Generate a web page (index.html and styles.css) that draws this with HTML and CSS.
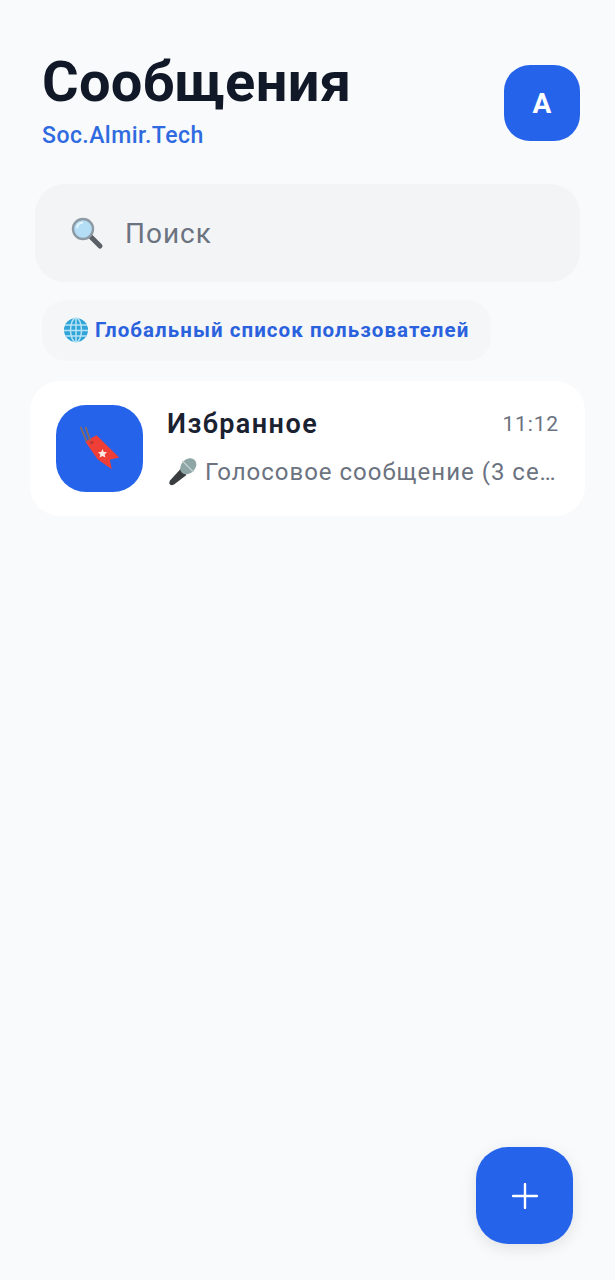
FILE: index.html
```html
<!DOCTYPE html>
<html>
<head>
    <meta charset="utf-8"/>
    <title>Сообщения</title>
    <link rel="stylesheet" href="styles.css">
</head>
<body>
<div id="app">
    <div class="header">
        <div class="header-text">
            <div class="title">Сообщения</div>
            <div class="sub-title">Soc.Almir.Tech</div>
        </div>
        <div class="profile">A</div>
    </div>

    <div class="search">
        <svg class="search-icon" viewBox="0 0 34 34" width="34" height="34">
            <path d="M20 20 L30 30" stroke="#5b6066" stroke-width="5" stroke-linecap="round"/>
            <circle cx="13" cy="13" r="10" fill="#b4def5" stroke="#8d9aa3" stroke-width="2.400"/>
            <path d="M7 12 A6.500 6.500 0 0 1 13 6.500" fill="none" stroke="#e3f4fc" stroke-width="2"/>
        </svg>
        <span class="search-text">Поиск</span>
    </div>

    <div class="global-link">
        <svg class="globe-icon" viewBox="0 0 26 26" width="26" height="26">
            <circle cx="13" cy="13" r="12" fill="#2fa4d9"/>
            <g fill="none" stroke="#b5e2f5" stroke-width="1.500">
                <ellipse cx="13" cy="13" rx="5.500" ry="12"/>
                <path d="M13 1 V25 M2 8 H24 M1 13.500 H25 M2 19 H24"/>
            </g>
        </svg>
        <span>Глобальный список пользователей</span>
    </div>

    <div class="chat-item">
        <div class="chat-avatar">
            <svg viewBox="0 0 46 46" width="46" height="46">
                <path d="M8.200 15.500 L19.500 9.200 L42.200 31.500 L32.800 33.800 L34.800 43.200 L20.500 33.200 Z" fill="#ee3e36"/>
                <circle cx="14.800" cy="16.500" r="1.600" fill="#b5342f"/>
                <path d="M3.800 1.500 L9.500 15 M8.800 1.500 L13 14" stroke="#8a6a5c" stroke-width="1.800" fill="none" stroke-linecap="round"/>
                <path d="M25.500 23 L26.800 26 L30 26.300 L27.600 28.500 L28.400 31.600 L25.500 30 L22.600 31.600 L23.400 28.500 L21 26.300 L24.200 26 Z" fill="#fde9e4"/>
            </svg>
        </div>
        <div class="chat-body">
            <div class="chat-top">
                <span class="chat-name">Избранное</span>
                <span class="chat-time">11:12</span>
            </div>
            <div class="chat-last">
                <svg class="mic-icon" viewBox="0 0 30 28" width="30" height="28">
                    <path d="M13.500 11 L19.500 17 L7 26.500 Q4.500 28 3 26.500 Q1.500 25 3 22.500 Z" fill="#3a3d40"/>
                    <ellipse cx="21.300" cy="8.300" rx="9" ry="7" transform="rotate(-45 21.300 8.300)" fill="#8fa6a6"/>
                    <path d="M15.500 3 L26.500 14" stroke="#c5d2d2" stroke-width="1.200"/>
                </svg>
                <span class="chat-preview">Голосовое сообщение (3 се…</span>
            </div>
        </div>
    </div>

    <div class="fab">
        <svg viewBox="0 0 26 26" width="26" height="26">
            <path d="M13 1 V25 M1 13 H25" stroke="#fff" stroke-width="2.400" stroke-linecap="round"/>
        </svg>
    </div>
</div>
</body>
</html>
```

FILE: styles.css
```css
html,
body,
#app {
    height: 100%;
    margin: 0;
    padding: 0;
}

body {
    font-family: Roboto, "Noto Sans", sans-serif;
    background: #f9fafb;
    overflow: hidden;
}

#app {
    position: relative;
    height: 1280px;
    padding-top: 52px;
    box-sizing: border-box;
}

.header {
    display: flex;
    justify-content: space-between;
    align-items: flex-start;
    padding: 0 35px 0 42px;
    height: 132px;
}

.title {
    color: #111827;
    font-weight: 700;
    font-size: 56px;
    line-height: 60px;
    letter-spacing: 0.3px;
}

.sub-title {
    color: #2f6ae0;
    font-weight: 500;
    font-size: 23px;
    line-height: 28px;
    letter-spacing: 0.45px;
    margin-top: 10px;
}

.profile {
    width: 76px;
    height: 76px;
    margin-top: 13px;
    border-radius: 26px;
    background: #2563eb;
    color: #fff;
    font-weight: 700;
    font-size: 28px;
    display: flex;
    justify-content: center;
    align-items: center;
}

.search {
    display: flex;
    align-items: center;
    height: 98px;
    margin: 0 35px;
    padding-left: 35px;
    border-radius: 30px;
    background: #f3f4f6;
}

.search-text {
    margin-left: 21px;
    color: #6b7280;
    font-size: 28px;
    letter-spacing: 1px;
}

.global-link {
    display: flex;
    align-items: center;
    width: 449px;
    height: 61px;
    box-sizing: border-box;
    margin: 18px 0 20px 42px;
    padding: 0 0 2px 21px;
    border-radius: 24px;
    background: #f5f6f8;
    color: #2a62de;
    font-weight: 700;
    font-size: 20.500px;
    letter-spacing: 1.05px;
    white-space: nowrap;
}

.global-link span {
    margin-left: 6px;
}

.chat-item {
    display: flex;
    align-items: center;
    height: 135px;
    margin: 0 30px;
    padding: 0 26px;
    box-sizing: border-box;
    border-radius: 30px;
    background: #fff;
}

.chat-avatar {
    flex: none;
    width: 87px;
    height: 87px;
    border-radius: 30px;
    background: #2563eb;
    display: flex;
    justify-content: center;
    align-items: center;
}

.chat-body {
    flex: 1;
    min-width: 0;
    margin-left: 24px;
    padding-bottom: 4px;
}

.chat-top {
    display: flex;
    justify-content: space-between;
    align-items: center;
}

.chat-name {
    color: #1a2130;
    font-weight: 600;
    font-size: 27px;
    letter-spacing: 1.45px;
}

.chat-time {
    color: #6b7280;
    font-size: 21px;
    letter-spacing: 0.85px;
}

.chat-last {
    display: flex;
    align-items: center;
    margin-top: 18px;
}

.chat-preview {
    margin-left: 8px;
    color: #6b7280;
    font-size: 24px;
    letter-spacing: 1px;
    white-space: nowrap;
}

.fab {
    position: absolute;
    left: 476px;
    top: 1147px;
    width: 97px;
    height: 97px;
    border-radius: 32px;
    background: #2563eb;
    box-shadow: 0 4px 16px rgba(0, 0, 0, 0.1);
    display: flex;
    justify-content: center;
    align-items: center;
}
```
